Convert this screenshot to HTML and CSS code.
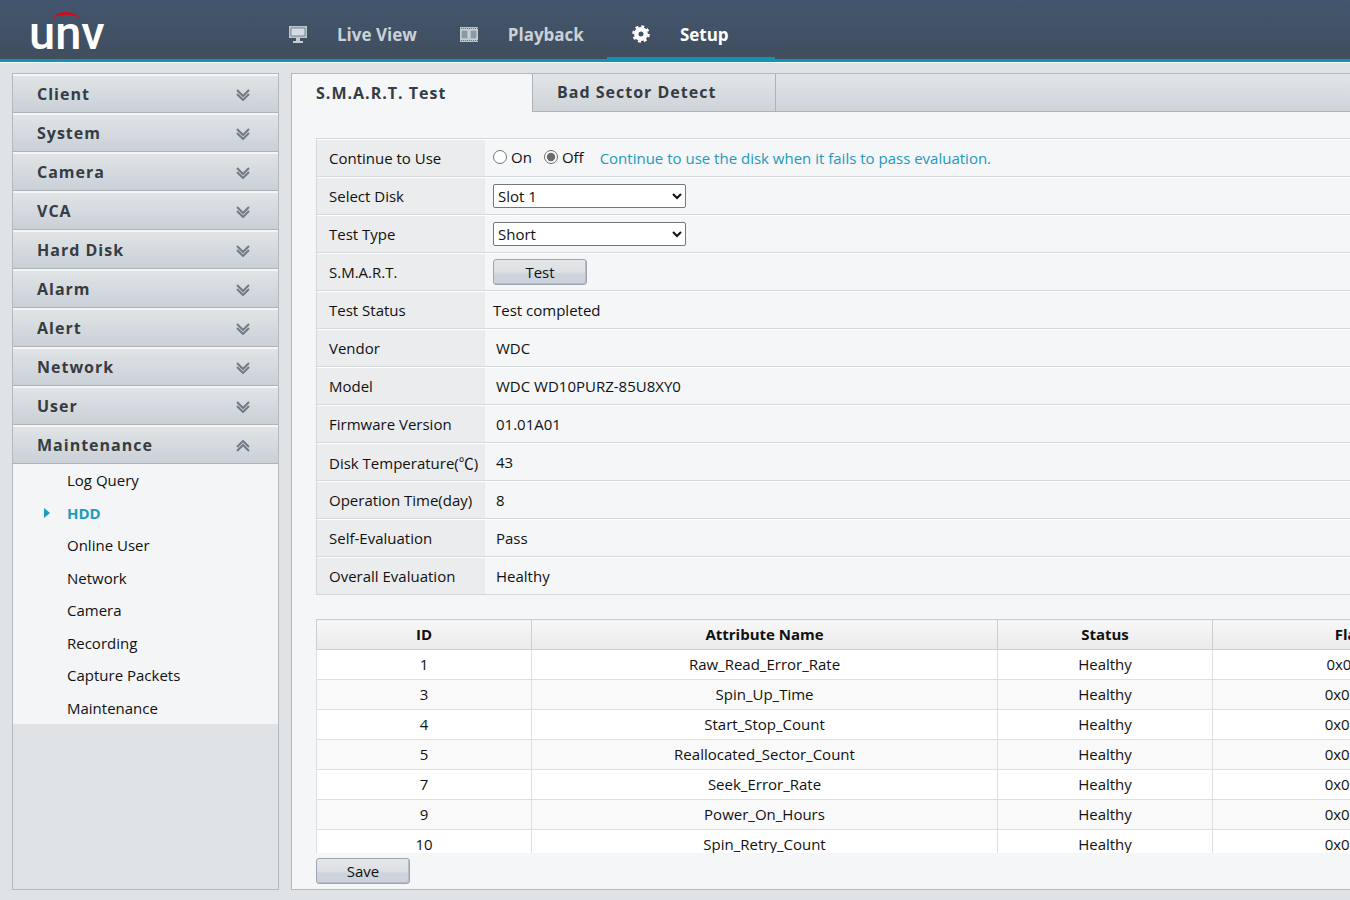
FILE: index.html
```html
<!DOCTYPE html>
<html lang="en">
<head>
  <meta charset="UTF-8" />
  <meta name="viewport" content="width=device-width, initial-scale=1.0" />
  <title>Setup - HDD</title>
  <link rel="stylesheet" href="styles.css">
</head>
<body>

  <svg class="defs" aria-hidden="true">
    <symbol id="chevrons" viewBox="0 0 14 12">
      <path d="M1 1l6 6 6-6M1 5l6 6 6-6" fill="none" stroke="#727a86" stroke-width="2" />
    </symbol>
  </svg>

  <header>
    <svg class="logo" viewBox="0 0 80 50" role="img" aria-label="unv">
      <path d="M21 10Q36-2 51 10Q36 3 21 10Z" fill="#e60012" />
      <text x="-1" y="41">unv</text>
    </svg>
    <nav class="main-nav">
      <a href="#live">
        <svg viewBox="0 0 18 18"><path d="M0 1h18v12H0z" fill="#bcc4cc" /><path d="M2 3h14v8H2z" fill="#d6dae2" stroke="#77838f" /><path d="M7 13h4v3h3v2H4v-2h3z" fill="#c5ccd4" /></svg>
        Live View
      </a>
      <a href="#playback">
        <svg viewBox="0 0 18 18"><path d="M0 2h18v15H0z" fill="#b9c1c9" /><path d="M1 5h7v9H1zM10 5h7v9h-7z" fill="#8e98a3" stroke="#d5dae0" /><path d="M1 3.500h17M1 15.500h17" stroke="#6b7885" stroke-dasharray="1 1" /></svg>
        Playback
      </a>
      <a href="#setup" class="active">
        <svg viewBox="0 0 18 18"><g fill="none" stroke="#fff"><circle cx="9" cy="9" r="4.700" stroke-width="4.400" /><circle cx="9" cy="9" r="7.600" stroke-width="2.400" stroke-dasharray="3 2.970" /></g></svg>
        Setup
      </a>
    </nav>
  </header>

  <main>
    <aside>
      <nav class="menu">
        <button type="button">Client <svg><use href="#chevrons" /></svg></button>
        <button type="button">System <svg><use href="#chevrons" /></svg></button>
        <button type="button">Camera <svg><use href="#chevrons" /></svg></button>
        <button type="button">VCA <svg><use href="#chevrons" /></svg></button>
        <button type="button">Hard Disk <svg><use href="#chevrons" /></svg></button>
        <button type="button">Alarm <svg><use href="#chevrons" /></svg></button>
        <button type="button">Alert <svg><use href="#chevrons" /></svg></button>
        <button type="button">Network <svg><use href="#chevrons" /></svg></button>
        <button type="button">User <svg><use href="#chevrons" /></svg></button>
        <button type="button" class="open">Maintenance <svg><use href="#chevrons" /></svg></button>
      </nav>
      <nav class="submenu">
        <a href="#log">Log Query</a>
        <a href="#hdd" class="current">HDD</a>
        <a href="#online">Online User</a>
        <a href="#network">Network</a>
        <a href="#camera">Camera</a>
        <a href="#recording">Recording</a>
        <a href="#capture">Capture Packets</a>
        <a href="#maintenance">Maintenance</a>
      </nav>
    </aside>

    <section class="panel">
      <div class="tabs">
        <button type="button" class="selected">S.M.A.R.T. Test</button>
        <button type="button">Bad Sector Detect</button>
      </div>

      <div class="content">
        <div class="settings">
          <div class="row">
            <span class="name">Continue to Use</span>
            <div class="field">
              <label class="radio"><input type="radio" name="continue" value="on"> On</label>
              <label class="radio"><input type="radio" name="continue" value="off" checked> Off</label>
              <span class="hint">Continue to use the disk when it fails to pass evaluation.</span>
            </div>
          </div>
          <div class="row">
            <label class="name" for="disk">Select Disk</label>
            <div class="field"><select id="disk"><option>Slot 1</option></select></div>
          </div>
          <div class="row">
            <label class="name" for="testType">Test Type</label>
            <div class="field"><select id="testType"><option>Short</option></select></div>
          </div>
          <div class="row">
            <span class="name">S.M.A.R.T.</span>
            <div class="field"><button type="button" class="btn">Test</button></div>
          </div>
          <div class="row"><span class="name">Test Status</span><div class="field">Test completed</div></div>
          <div class="row"><span class="name">Vendor</span><div class="field value">WDC</div></div>
          <div class="row"><span class="name">Model</span><div class="field value">WDC WD10PURZ-85U8XY0</div></div>
          <div class="row"><span class="name">Firmware Version</span><div class="field value">01.01A01</div></div>
          <div class="row"><span class="name">Disk Temperature(℃)</span><div class="field value">43</div></div>
          <div class="row"><span class="name">Operation Time(day)</span><div class="field value">8</div></div>
          <div class="row"><span class="name">Self-Evaluation</span><div class="field value">Pass</div></div>
          <div class="row"><span class="name">Overall Evaluation</span><div class="field value">Healthy</div></div>
        </div>

        <div class="table-wrap">
          <table>
            <colgroup><col class="c-id"><col class="c-name"><col class="c-status"><col class="c-flag"></colgroup>
            <thead>
              <tr><th>ID</th><th>Attribute Name</th><th>Status</th><th>Flag</th></tr>
            </thead>
            <tbody>
              <tr><td>1</td><td>Raw_Read_Error_Rate</td><td>Healthy</td><td>0x002f</td></tr>
              <tr><td>3</td><td>Spin_Up_Time</td><td>Healthy</td><td>0x0027</td></tr>
              <tr><td>4</td><td>Start_Stop_Count</td><td>Healthy</td><td>0x0032</td></tr>
              <tr><td>5</td><td>Reallocated_Sector_Count</td><td>Healthy</td><td>0x0033</td></tr>
              <tr><td>7</td><td>Seek_Error_Rate</td><td>Healthy</td><td>0x0032</td></tr>
              <tr><td>9</td><td>Power_On_Hours</td><td>Healthy</td><td>0x0032</td></tr>
              <tr><td>10</td><td>Spin_Retry_Count</td><td>Healthy</td><td>0x0032</td></tr>
            </tbody>
          </table>
        </div>

        <button type="button" class="btn">Save</button>
      </div>
    </section>
  </main>

</body>
</html>
```
FILE: styles.css
```css
* {
  box-sizing: border-box;
}

body {
  margin: 0;
  height: 100vh;
  display: flex;
  flex-direction: column;
  overflow: hidden;
  background: #dfe3e6;
  color: #111;
  font-family: "Open Sans", "Noto Sans CJK SC", sans-serif;
  font-size: 15px;
}

button, select, input {
  font: inherit;
  color: inherit;
}

a {
  color: inherit;
  text-decoration: none;
}

.defs {
  display: none;
}

header {
  flex: none;
  height: 62px;
  display: flex;
  padding-left: 30px;
  background: linear-gradient(#43556f, #404e5d);
  border-bottom: 3px solid #1492b5;
  box-shadow: 0 1px #f3ffff;
}

.logo {
  width: 80px;
  height: 50px;
  margin-top: 8px;
  overflow: visible;
}

.logo text {
  font-family: Roboto, sans-serif;
  font-size: 47px;
  font-weight: 500;
  fill: #fff;
}

.main-nav {
  display: flex;
  margin-left: 159px;
}

.main-nav a {
  display: flex;
  align-items: center;
  gap: 30px;
  height: 60px;
  padding: 11px 23px 0 20px;
  border-bottom: 3px solid transparent;
  color: #cbd1d8;
  font-size: 17px;
  font-weight: 700;
}

.main-nav a:last-child {
  padding-left: 25px;
  padding-right: 46px;
}

.main-nav svg {
  width: 18px;
  height: 18px;
}

.main-nav .active {
  color: #fff;
  border-bottom-color: #1492b5;
}

main {
  flex: 1;
  min-height: 0;
  display: flex;
  gap: 12px;
  padding: 11px 0 10px 12px;
}

aside {
  flex: none;
  width: 267px;
  border: 1px solid #b4b9be;
}

.menu {
  display: grid;
  grid-auto-rows: 1fr;
  height: 390px;
}

.menu button {
  display: flex;
  align-items: center;
  justify-content: space-between;
  padding: 0 28px 0 24px;
  border: 0;
  border-top: 2px solid #f3f5f6;
  border-bottom: 1px solid #aeb3b8;
  background: linear-gradient(#e0e4e6, #c9d0d7);
  color: #363c42;
  font-size: 16px;
  font-weight: 700;
  letter-spacing: 1px;
}

.menu svg {
  width: 14px;
  height: 12px;
  margin-top: 2px;
}

.menu .open svg {
  transform: rotate(180deg);
}

.submenu {
  display: grid;
  grid-auto-rows: 1fr;
  height: 260px;
  background: #f3f5f7;
}

.submenu a {
  display: flex;
  align-items: center;
  padding-left: 54px;
}

.submenu .current {
  padding-left: 31px;
  color: #1d9dbd;
  font-weight: 700;
}

.submenu .current::before {
  content: "";
  margin-right: 17px;
  border-left: 6px solid #1d9dbd;
  border-top: 5px solid transparent;
  border-bottom: 5px solid transparent;
}

.panel {
  flex: 1;
  min-width: 0;
  display: flex;
  flex-direction: column;
  border: 1px solid #b4b9be;
  border-right: 0;
  background: #f4f6f8;
}

.tabs {
  flex: none;
  display: flex;
  height: 38px;
  background: linear-gradient(#e2e5e8, #cdd3d9);
}

.tabs button {
  width: 243px;
  padding: 0 24px 1px;
  border: 0;
  border-right: 1px solid #aeb3b8;
  border-bottom: 1px solid #aeb3b8;
  background: none;
  color: #363c42;
  font-size: 16px;
  font-weight: 700;
  letter-spacing: 1px;
  text-align: left;
}

.tabs::after {
  content: "";
  flex: 1;
  border-bottom: 1px solid #aeb3b8;
}

.tabs .selected {
  width: 241px;
  border-bottom: 0;
  background: #f4f6f8;
}

.content {
  flex: 1;
  min-height: 0;
  display: flex;
  flex-direction: column;
  align-items: flex-start;
  padding: 26px 0 5px 24px;
}

.settings {
  flex: none;
  align-self: stretch;
  border: 1px solid #d5d8da;
  border-width: 1px 0 0 1px;
}

.row {
  display: flex;
  height: 38px;
  border-top: 1px solid #fff;
  border-bottom: 1px solid #d5d8da;
}

.name {
  display: flex;
  align-items: center;
  width: 168px;
  padding-left: 12px;
  background: #ebecee;
  white-space: nowrap;
}

.field {
  display: flex;
  align-items: center;
  padding-left: 8px;
}

.value {
  padding-left: 11px;
}

.radio {
  display: flex;
  align-items: center;
  gap: 4px;
  margin-right: 12px;
  padding-bottom: 2px;
}

.radio input {
  width: 14px;
  height: 14px;
  margin: 0;
  accent-color: #6b6b6b;
}

.hint {
  margin-left: 4px;
  color: #2499bd;
}

select {
  width: 193px;
  height: 24px;
  padding: 0;
  border: 1px solid #767676;
  border-radius: 2px;
  background: #fff;
}

.btn {
  flex: none;
  width: 94px;
  height: 26px;
  padding: 0;
  border: 1px solid #9fa5ae;
  border-radius: 3px;
  background: linear-gradient(#e4e7ea, #dce0e4 50%, #cdd4dc 60%, #ccd3dc);
  box-shadow: inset -1px -1px #b5bbc4;
}

.table-wrap {
  flex: 1;
  min-height: 0;
  align-self: stretch;
  margin: 24px 0 5px;
  overflow: hidden;
}

table {
  width: 1172px;
  table-layout: fixed;
  border-collapse: collapse;
  background: #fff;
}

.c-id, .c-status {
  width: 215px;
}

.c-name {
  width: 466px;
}

th, td {
  height: 30px;
  padding: 0 0 2px;
  border: 1px solid #dddfe0;
  text-align: center;
}

th {
  border-color: #ccced0;
  background: linear-gradient(#f8f8f8, #eaeaea);
  font-weight: 700;
}

tbody tr:nth-child(even) {
  background: #f9f9f9;
}
```
